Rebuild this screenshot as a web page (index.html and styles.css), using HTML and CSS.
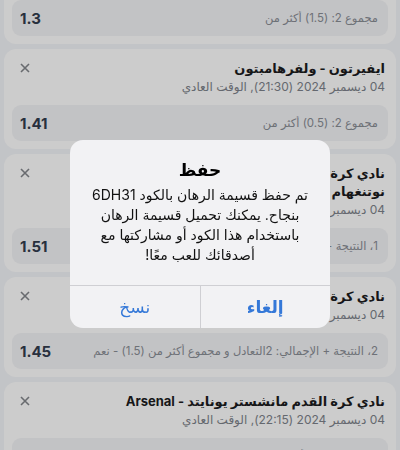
FILE: index.html
```html
<!DOCTYPE html>
<html lang="ar" dir="rtl">
<head>
    <meta charset="UTF-8">
    <meta name="viewport" content="width=device-width, initial-scale=1.0">
    <title>قسيمة الرهان</title>
    <link rel="stylesheet" href="styles.css">
</head>
<body>
    <div class="coupon-list">
        <div class="bet-card">
            <div class="bet-head">
                <div class="bet-info">
                    <div class="bet-title">نادي كرة القدم برايتون - فولهام</div>
                    <div class="bet-date">04 ديسمبر 2024 (21:30), الوقت العادي</div>
                </div>
                <svg class="bet-remove" width="10" height="10" viewBox="0 0 10 10"><path d="M1 1L9 9M9 1L1 9"/></svg>
            </div>
            <div class="bet-row">
                <span class="bet-pick">مجموع 2: (1.5) أكثر من</span>
                <span class="bet-odds">1.3</span>
            </div>
        </div>

        <div class="bet-card">
            <div class="bet-head">
                <div class="bet-info">
                    <div class="bet-title">ايفيرتون - ولفرهامبتون</div>
                    <div class="bet-date">04 ديسمبر 2024 (21:30), الوقت العادي</div>
                </div>
                <svg class="bet-remove" width="10" height="10" viewBox="0 0 10 10"><path d="M1 1L9 9M9 1L1 9"/></svg>
            </div>
            <div class="bet-row">
                <span class="bet-pick">مجموع 2: (0.5) أكثر من</span>
                <span class="bet-odds">1.41</span>
            </div>
        </div>

        <div class="bet-card">
            <div class="bet-head">
                <div class="bet-info">
                    <div class="bet-title">نادي كرة القدم ليستر سيتي - نادي كرة<br>نوتنغهام فورست</div>
                    <div class="bet-date">04 ديسمبر 2024 (21:30), الوقت العادي</div>
                </div>
                <svg class="bet-remove" width="10" height="10" viewBox="0 0 10 10"><path d="M1 1L9 9M9 1L1 9"/></svg>
            </div>
            <div class="bet-row">
                <span class="bet-pick">1، النتيجة + الإجمالي: 1 و مجموع أكثر من (1.5) - نعم</span>
                <span class="bet-odds">1.51</span>
            </div>
        </div>

        <div class="bet-card">
            <div class="bet-head">
                <div class="bet-info">
                    <div class="bet-title">نادي كرة القدم أستون فيلا - برينتفورد</div>
                    <div class="bet-date">04 ديسمبر 2024 (21:30), الوقت العادي</div>
                </div>
                <svg class="bet-remove" width="10" height="10" viewBox="0 0 10 10"><path d="M1 1L9 9M9 1L1 9"/></svg>
            </div>
            <div class="bet-row">
                <span class="bet-pick">2، النتيجة + الإجمالي: 2التعادل و مجموع أكثر من (1.5) - نعم</span>
                <span class="bet-odds">1.45</span>
            </div>
        </div>

        <div class="bet-card">
            <div class="bet-head">
                <div class="bet-info">
                    <div class="bet-title">نادي كرة القدم مانشستر يونايتد - Arsenal</div>
                    <div class="bet-date">04 ديسمبر 2024 (22:15), الوقت العادي</div>
                </div>
                <svg class="bet-remove" width="10" height="10" viewBox="0 0 10 10"><path d="M1 1L9 9M9 1L1 9"/></svg>
            </div>
            <div class="bet-row">
                <span class="bet-pick">مجموع 1: (1.5) أكثر من</span>
                <span class="bet-odds">1.62</span>
            </div>
        </div>
    </div>

    <!-- نافذة الحفظ -->
    <div class="alert-overlay">
        <div class="alert-box">
            <h2 class="alert-title">حفظ</h2>
            <p class="alert-message">تم حفظ قسيمة الرهان بالكود 6DH31<br>بنجاح. يمكنك تحميل قسيمة الرهان<br>باستخدام هذا الكود أو مشاركتها مع<br>أصدقائك للعب معًا!</p>
            <div class="alert-actions">
                <button class="alert-btn alert-btn-main">إلغاء</button>
                <button class="alert-btn">نسخ</button>
            </div>
        </div>
    </div>
</body>
</html>
```

FILE: styles.css
```css
body {
    margin: 0;
    height: 100vh;
    overflow: hidden;
    background: #f3f5f9;
    font-family: 'Inter', 'DejaVu Sans', sans-serif;
    color: #1c1c1e;
}
.coupon-list {
    display: flex;
    flex-direction: column;
    gap: 5px;
    padding: 0 4px;
    margin-top: -56px;
}
.bet-card {
    background: #ffffff;
    border-radius: 12px;
    padding: 10px 8px 8px;
}
.bet-head {
    display: flex;
    align-items: flex-start;
    padding: 0 3px;
}
.bet-info {
    flex: 1;
    min-width: 0;
}
.bet-title {
    font-size: 13px;
    font-weight: bold;
    line-height: 18px;
}
.bet-date {
    font-size: 12px;
    line-height: 20px;
    color: #7e838b;
}
.bet-remove {
    margin: 4px 0 0 5px;
    stroke: #83868b;
    stroke-width: 1.6;
}
.bet-row {
    display: flex;
    align-items: center;
    justify-content: space-between;
    gap: 10px;
    height: 36px;
    margin-top: 8px;
    padding: 0 10px 0 8px;
    background: #f3f4f7;
    border-radius: 9px;
}
.bet-pick {
    font-size: 11.5px;
    color: #8a8e95;
    white-space: nowrap;
    overflow: hidden;
}
.bet-odds {
    font-size: 15px;
    font-weight: bold;
    color: #323c4e;
}
/* خلفية معتمة خلف النافذة */
.alert-overlay {
    position: fixed;
    inset: 0;
    background: rgba(0, 0, 0, 0.2);
    display: flex;
    justify-content: center;
    align-items: center;
}
.alert-box {
    width: 260px;
    margin-top: 18px;
    background: #f2f2f4;
    border-radius: 13px;
    text-align: center;
    overflow: hidden;
}
.alert-title {
    margin: 19px 16px 0;
    font-size: 17px;
    line-height: 22px;
    color: #000;
}
.alert-message {
    margin: 4px 16px 20px;
    font-size: 14px;
    line-height: 20px;
    color: #111;
}
.alert-actions {
    display: flex;
    border-top: 1px solid #cfcfd3;
}
.alert-btn {
    flex: 1;
    height: 42px;
    background: none;
    border: none;
    font-family: inherit;
    font-size: 17px;
    color: #3478d8;
}
.alert-btn + .alert-btn {
    border-right: 1px solid #cfcfd3;
}
.alert-btn-main {
    font-weight: bold;
}
```
